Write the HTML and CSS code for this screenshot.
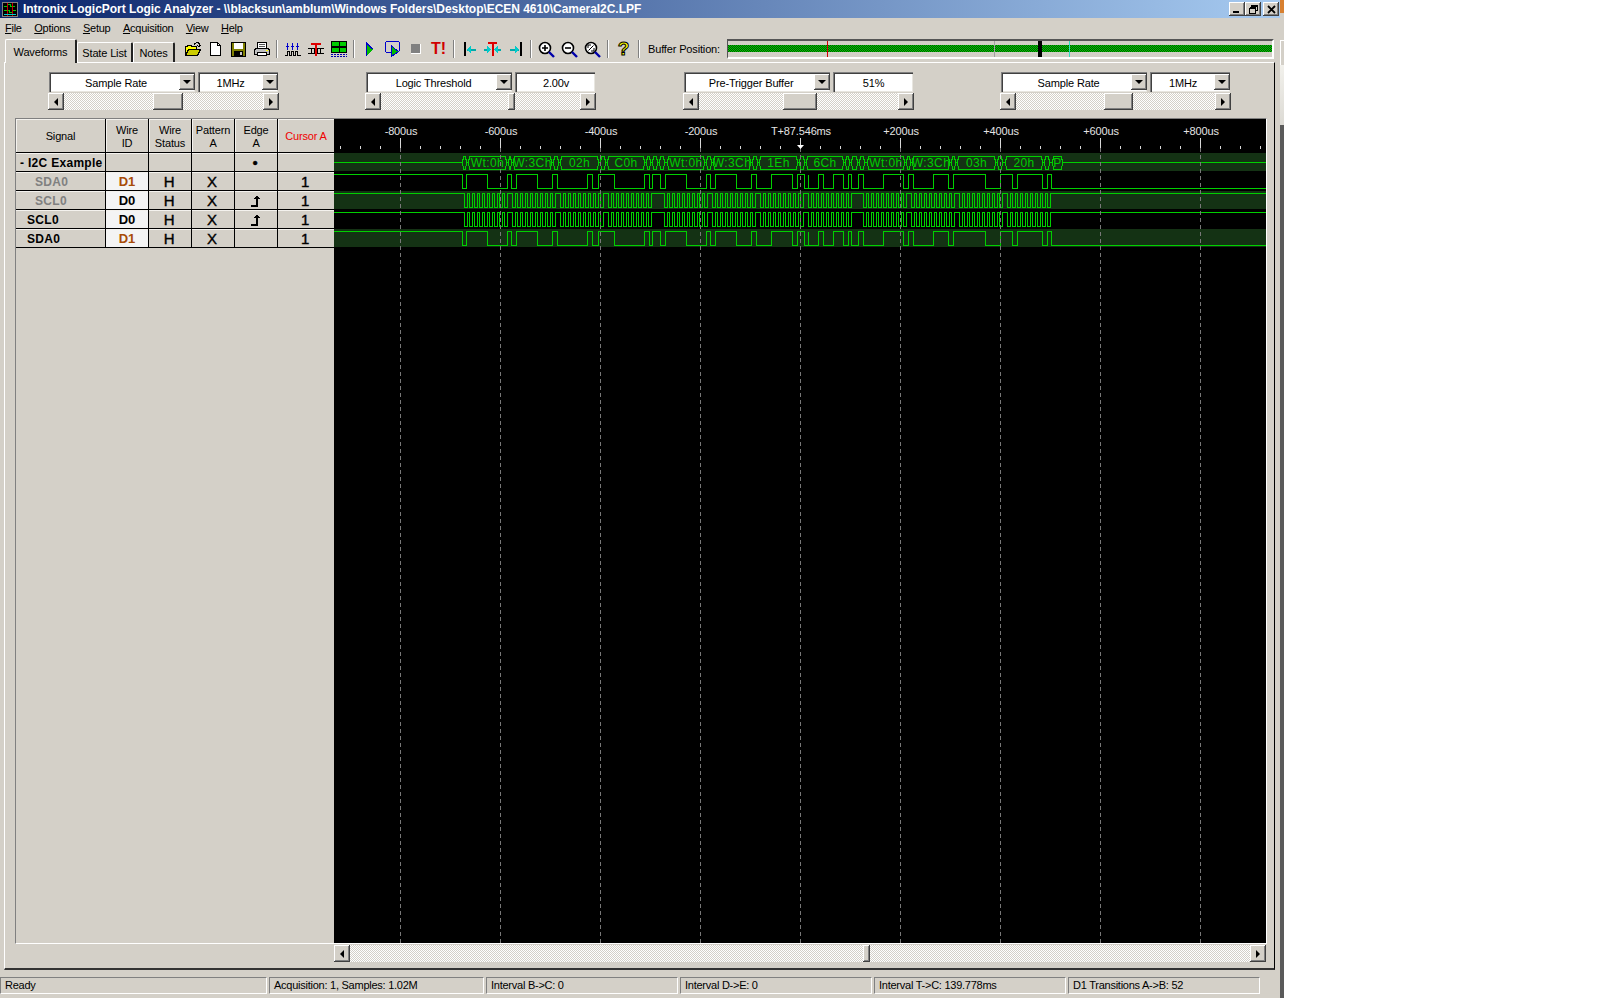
FILE: index.html
```html
<!DOCTYPE html>
<html lang="en">
<head>
    <meta charset="UTF-8">
    <title>Intronix LogicPort Logic Analyzer</title>
    <link rel="stylesheet" href="styles.css">
</head>
<body>
<div class="window">
    <div class="titlebar">
        <svg class="app-icon" width="16" height="15" viewBox="0 0 16 15" shape-rendering="crispEdges">
            <rect width="16" height="15" fill="#808080"/>
            <rect x="1" y="1" width="14" height="13" fill="#000"/>
            <path d="M2 4.500h3v-2h3v2h5M2 8.500h5v2h3v-2h4" fill="none" stroke="#0c0"/>
            <path d="M5.500 1v13M10.500 1v13" stroke="#c00"/>
            <path d="M2 12.500h12" stroke="#0cc"/>
        </svg>
        <span class="title-text">Intronix LogicPort Logic Analyzer - \\blacksun\amblum\Windows Folders\Desktop\ECEN 4610\CameraI2C.LPF</span>
        <div class="caption-btns">
            <button class="caption-btn"><svg width="8" height="8" viewBox="0 0 8 8" shape-rendering="crispEdges"><rect x="0" y="6" width="6" height="2"/></svg></button>
            <button class="caption-btn"><svg width="9" height="9" viewBox="0 0 9 9" shape-rendering="crispEdges"><path d="M2.500 2V.5h6v5H7M.5 3.500h6v5h-6zM.5 2.500h6" fill="none" stroke="#000"/><path d="M2 1h7" stroke="#000"/></svg></button>
            <button class="caption-btn"><svg width="9" height="9" viewBox="0 0 9 9"><path d="M1 1l7 7M8 1l-7 7" stroke="#000" stroke-width="1.800"/></svg></button>
        </div>
    </div>

    <div class="menubar">
        <span><u>F</u>ile</span>
        <span><u>O</u>ptions</span>
        <span><u>S</u>etup</span>
        <span><u>A</u>cquisition</span>
        <span><u>V</u>iew</span>
        <span><u>H</u>elp</span>
    </div>

    <div class="toolbar">
        <div class="tabs">
            <div class="tab tab-active">Waveforms</div>
            <div class="tab tab-state">State List</div>
            <div class="tab tab-notes">Notes</div>
        </div>

        <div class="tool tool-first"><svg width="18" height="16" viewBox="0 0 18 16" shape-rendering="crispEdges">
            <path d="M1.500 14.500V5.500h2v-1h4v1h5v3" fill="#ff0" stroke="#000"/>
            <path d="M1.500 14.500l3-6h12l-3 6z" fill="#cc0" stroke="#000"/>
            <path d="M10 3.500c1-2 4-2.500 5-1v3M13 4l2 2 2-2" fill="none" stroke="#000"/>
        </svg></div>
        <div class="tool"><svg width="13" height="15" viewBox="0 0 13 15" shape-rendering="crispEdges">
            <path d="M1.500 .5h7l3 3v10h-10z" fill="#fff" stroke="#000"/>
            <path d="M8.500 .5v3h3" fill="none" stroke="#000"/>
        </svg></div>
        <div class="tool"><svg width="15" height="15" viewBox="0 0 15 15" shape-rendering="crispEdges">
            <rect x=".5" y=".5" width="14" height="14" fill="#808000" stroke="#000"/>
            <rect x="3" y="1" width="9" height="6" fill="#fff"/>
            <rect x="3" y="9" width="9" height="5" fill="#000"/>
            <rect x="9" y="10" width="2" height="3" fill="#c8c8c8"/>
        </svg></div>
        <div class="tool"><svg width="18" height="15" viewBox="0 0 18 15" shape-rendering="crispEdges">
            <path d="M4.500 6.500V.5h9v6" fill="#fff" stroke="#000"/>
            <path d="M6 2.500h6M6 4.500h6" stroke="#555"/>
            <path d="M1.500 7.500l2-1h11l2 1v5h-15z" fill="#c0c0c0" stroke="#000"/>
            <path d="M4.500 10.500h9v3h-9z" fill="#fff" stroke="#000"/>
            <path d="M13 8.500h2" stroke="#ff0"/>
        </svg></div>
        <div class="tool-sep"></div>

        <div class="tool"><svg width="16" height="15" viewBox="0 0 16 15" shape-rendering="crispEdges">
            <path d="M2.500 7.500V1M7.500 7.500V1M12.500 7.500V1" stroke="#00c"/>
            <path d="M.5 3.500h4l-2 3zM5.500 3.500h4l-2 3zM10.500 3.500h4l-2 3z" fill="#00c"/>
            <path d="M0 13.500h2.500v-4h2v4h2v-4h2v4h2v-4h2v4h3" fill="none" stroke="#000"/>
        </svg></div>
        <div class="tool"><svg width="16" height="15" viewBox="0 0 16 15" shape-rendering="crispEdges">
            <path d="M0 6.500h3l1 5h2l1-5h2l1 5h2l1-5h3M0 11.500h3l1-5h2l1 5h2l1-5h2l1 5h3" fill="none" stroke="#000"/>
            <path d="M3 1.500h10M8 1.500V14" stroke="#d00" stroke-width="2"/>
        </svg></div>
        <div class="tool"><svg width="16" height="16" viewBox="0 0 16 16" shape-rendering="crispEdges">
            <rect x=".5" y=".5" width="15" height="5" fill="#0c0" stroke="#000"/>
            <rect x=".5" y="6.500" width="15" height="5" fill="#0c0" stroke="#000"/>
            <path d="M8.500 1v10" stroke="#000"/>
            <path d="M0 13.500h16M0 15.500h16" stroke="#00a" stroke-dasharray="2 1"/>
        </svg></div>
        <div class="tool-sep"></div>

        <div class="tool"><svg width="8" height="14" viewBox="0 0 8 14" shape-rendering="crispEdges">
            <path d="M1 1l6 6-6 6z" fill="#0b0"/>
            <path d="M.5 0v14M.5 1l6 6" stroke="#00c" fill="none"/>
        </svg></div>
        <div class="tool"><svg width="16" height="16" viewBox="0 0 16 16" shape-rendering="crispEdges">
            <path d="M6 11.500H1.500l-1-1v-9l1-1h12l1 1v8l-1 1h-2" fill="none" stroke="#00c"/>
            <path d="M6.500 5l7 5.500-7 5z" fill="#0b0" stroke="#00c"/>
        </svg></div>
        <div class="tool"><svg width="10" height="10" viewBox="0 0 10 10" shape-rendering="crispEdges">
            <rect width="9" height="9" fill="#808080"/>
            <path d="M0 9.500h10M9.500 0v10" stroke="#fff"/>
        </svg></div>
        <div class="tool tool-text">T!</div>
        <div class="tool-sep"></div>

        <div class="tool"><svg width="12" height="14" viewBox="0 0 12 14" shape-rendering="crispEdges">
            <rect x="0" y="0" width="2" height="14"/>
            <path d="M3 7.500h9" stroke="#0aa" stroke-width="2"/>
            <path d="M3 7.500l4-4v8z" fill="#0cc"/>
        </svg></div>
        <div class="tool"><svg width="17" height="14" viewBox="0 0 17 14" shape-rendering="crispEdges">
            <path d="M4 1h9M8.500 1v13" stroke="#d00" stroke-width="2"/>
            <path d="M0 7.500h6M11 7.500h6" stroke="#0aa" stroke-width="2"/>
            <path d="M7 7.500l-4-4v8zM10 7.500l4-4v8z" fill="#0cc"/>
        </svg></div>
        <div class="tool"><svg width="12" height="14" viewBox="0 0 12 14" shape-rendering="crispEdges">
            <rect x="10" y="0" width="2" height="14"/>
            <path d="M0 7.500h9" stroke="#0aa" stroke-width="2"/>
            <path d="M9 7.500l-4-4v8z" fill="#0cc"/>
        </svg></div>
        <div class="tool-sep"></div>

        <div class="tool"><svg width="17" height="17" viewBox="0 0 17 17">
            <circle cx="7" cy="7" r="5.500" fill="#fff" stroke="#000" stroke-width="1.600"/>
            <path d="M4 7h6M7 4v6" stroke="#000" stroke-width="1.600"/>
            <path d="M11 11l5 5" stroke="#00a" stroke-width="2.400"/>
        </svg></div>
        <div class="tool"><svg width="17" height="17" viewBox="0 0 17 17">
            <circle cx="7" cy="7" r="5.500" fill="#fff" stroke="#000" stroke-width="1.600"/>
            <path d="M4 7h6" stroke="#000" stroke-width="1.600"/>
            <path d="M11 11l5 5" stroke="#00a" stroke-width="2.400"/>
        </svg></div>
        <div class="tool"><svg width="17" height="17" viewBox="0 0 17 17">
            <circle cx="7" cy="7" r="5.500" fill="#fff" stroke="#000" stroke-width="1.600"/>
            <path d="M4.500 9.500l5-5M4 7V4h3M10 7v3H7" fill="none" stroke="#000"/>
            <path d="M11 11l5 5" stroke="#00a" stroke-width="2.400"/>
        </svg></div>
        <div class="tool-sep"></div>

        <div class="tool tool-help">?</div>
        <div class="tool-sep"></div>

        <span class="buffer-label">Buffer Position:</span>
        <div class="buffer-bar">
            <div class="buffer-fill"></div>
            <i class="buffer-mark mark-red" style="left: 99px"></i>
            <i class="buffer-mark mark-grey" style="left: 266px"></i>
            <i class="buffer-mark mark-black" style="left: 310px"></i>
            <i class="buffer-mark mark-cyan" style="left: 341px"></i>
        </div>
    </div>

    <div class="panel">
        <div class="controls">
            <div class="control">
                <div class="control-top">
                    <div class="field combo"><span>Sample Rate</span><b class="drop"></b></div>
                    <div class="field value"><span>1MHz</span><b class="drop"></b></div>
                </div>
                <div class="scrollbar">
                    <b class="sb-btn sb-left"></b>
                    <div class="sb-track"><div class="sb-thumb" style="margin-left: 89px; width: 30px"></div></div>
                    <b class="sb-btn sb-right"></b>
                </div>
            </div>
            <div class="control">
                <div class="control-top">
                    <div class="field combo"><span>Logic Threshold</span><b class="drop"></b></div>
                    <div class="field value"><span>2.00v</span></div>
                </div>
                <div class="scrollbar">
                    <b class="sb-btn sb-left"></b>
                    <div class="sb-track"><div class="sb-thumb" style="margin-left: 127px; width: 7px"></div></div>
                    <b class="sb-btn sb-right"></b>
                </div>
            </div>
            <div class="control">
                <div class="control-top">
                    <div class="field combo"><span>Pre-Trigger Buffer</span><b class="drop"></b></div>
                    <div class="field value"><span>51%</span></div>
                </div>
                <div class="scrollbar">
                    <b class="sb-btn sb-left"></b>
                    <div class="sb-track"><div class="sb-thumb" style="margin-left: 84px; width: 34px"></div></div>
                    <b class="sb-btn sb-right"></b>
                </div>
            </div>
            <div class="control">
                <div class="control-top">
                    <div class="field combo"><span>Sample Rate</span><b class="drop"></b></div>
                    <div class="field value"><span>1MHz</span><b class="drop"></b></div>
                </div>
                <div class="scrollbar">
                    <b class="sb-btn sb-left"></b>
                    <div class="sb-track"><div class="sb-thumb" style="margin-left: 88px; width: 29px"></div></div>
                    <b class="sb-btn sb-right"></b>
                </div>
            </div>
        </div>

        <div class="workspace">
            <div class="signals">
                <div class="signal-grid">
                    <div class="cell head">Signal</div>
                    <div class="cell head">Wire<br>ID</div>
                    <div class="cell head">Wire<br>Status</div>
                    <div class="cell head">Pattern<br>A</div>
                    <div class="cell head">Edge<br>A</div>
                    <div class="cell head head-red">Cursor A</div>

                    <div class="cell name name-group">- I2C Example</div>
                    <div class="cell"></div>
                    <div class="cell"></div>
                    <div class="cell"></div>
                    <div class="cell big">&bull;</div>
                    <div class="cell"></div>

                    <div class="cell name name-sub name-dim">SDA0</div>
                    <div class="cell wire wire-d1">D1</div>
                    <div class="cell big">H</div>
                    <div class="cell big">X</div>
                    <div class="cell"></div>
                    <div class="cell big">1</div>

                    <div class="cell name name-sub name-dim">SCL0</div>
                    <div class="cell wire">D0</div>
                    <div class="cell big">H</div>
                    <div class="cell big">X</div>
                    <div class="cell"><svg class="edge" width="11" height="12" viewBox="0 0 11 12" shape-rendering="crispEdges"><path d="M0 11h6V1" fill="none" stroke="#000" stroke-width="2"/><path d="M3 4l3-4 3 4z"/></svg></div>
                    <div class="cell big">1</div>

                    <div class="cell name">SCL0</div>
                    <div class="cell wire">D0</div>
                    <div class="cell big">H</div>
                    <div class="cell big">X</div>
                    <div class="cell"><svg class="edge" width="11" height="12" viewBox="0 0 11 12" shape-rendering="crispEdges"><path d="M0 11h6V1" fill="none" stroke="#000" stroke-width="2"/><path d="M3 4l3-4 3 4z"/></svg></div>
                    <div class="cell big">1</div>

                    <div class="cell name">SDA0</div>
                    <div class="cell wire wire-d1">D1</div>
                    <div class="cell big">H</div>
                    <div class="cell big">X</div>
                    <div class="cell"></div>
                    <div class="cell big">1</div>
                </div>
            </div>
            <svg id="scope" class="scope" width="932" height="824" viewBox="334 119 932 824"></svg>
        </div>

        <div class="bottom-row">
            <div class="scrollbar scrollbar-wide">
                <b class="sb-btn sb-left"></b>
                <div class="sb-track"><div class="sb-thumb" style="margin-left: 513px; width: 7px"></div></div>
                <b class="sb-btn sb-right"></b>
            </div>
        </div>
    </div>

    <div class="statusbar">
        <div class="status-cell">Ready</div>
        <div class="status-cell">Acquisition: 1, Samples: 1.02M</div>
        <div class="status-cell">Interval B-&gt;C: 0</div>
        <div class="status-cell">Interval D-&gt;E: 0</div>
        <div class="status-cell">Interval T-&gt;C: 139.778ms</div>
        <div class="status-cell">D1 Transitions A-&gt;B: 52</div>
    </div>
</div>
<div class="window-edge">
    <div class="edge-orange"></div>
    <div class="edge-grey"></div>
    <div class="edge-btn"></div>
    <div class="edge-light"></div>
    <div class="edge-dark"></div>
</div>
<script src="script.js"></script>
</body>
</html>
```

FILE: styles.css
```css
/* General */
* {
    box-sizing: border-box;
}

body {
    display: flex;
    width: 1598px;
    height: 998px;
    margin: 0;
    overflow: hidden;
    background-color: #fff;
    font-family: "Liberation Sans", Arial, sans-serif;
    font-size: 11px;
    letter-spacing: -0.15px;
    color: #000;
}

.window {
    display: flex;
    flex-direction: column;
    width: 1280px;
    height: 998px;
    background-color: #d4d0c8;
}

/* Title bar */
.titlebar {
    display: flex;
    align-items: center;
    flex: none;
    height: 18px;
    padding-left: 2px;
    background: linear-gradient(90deg, #0a246a, #a6caf0);
    color: #fff;
}

.app-icon {
    flex: none;
}

.title-text {
    margin-left: 5px;
    font-size: 12px;
    font-weight: bold;
    letter-spacing: -0.04px;
    white-space: nowrap;
}

.caption-btns {
    display: flex;
    margin-left: auto;
    margin-right: 1px;
}

.caption-btn {
    display: flex;
    align-items: center;
    justify-content: center;
    width: 16px;
    height: 14px;
    padding: 0;
    border: none;
    background-color: #d4d0c8;
    box-shadow: inset -1px -1px #404040, inset 1px 1px #fff, inset -2px -2px #808080;
}

.caption-btn:last-child {
    margin-left: 2px;
}

/* Menu */
.menubar {
    display: flex;
    align-items: center;
    flex: none;
    gap: 12.500px;
    height: 20px;
    padding-left: 5px;
    letter-spacing: -0.25px;
}

/* Toolbar and tabs */
.toolbar {
    display: flex;
    flex: none;
    height: 23px;
    margin-top: 1px;
}

.tabs {
    display: flex;
    align-items: flex-end;
    flex: none;
    width: 175px;
    padding-left: 5px;
}

.tab {
    display: flex;
    align-items: center;
    justify-content: center;
    height: 20px;
    background-color: #d4d0c8;
    border-top: 1px solid #fff;
    border-left: 1px solid #fff;
    border-right: 2px solid #222;
    border-radius: 2px 2px 0 0;
}

.tab-active {
    position: relative;
    z-index: 1;
    width: 72px;
    height: 24px;
    margin-bottom: -1px;
}

.tab-state {
    width: 56px;
}

.tab-notes {
    width: 42px;
}

.tool {
    display: flex;
    align-items: center;
    justify-content: center;
    flex: none;
    width: 23px;
    height: 20px;
}

.tool-first {
    margin-left: 6px;
}

.tool-text {
    font-size: 16px;
    font-weight: bold;
    color: #d00000;
}

.tool-help {
    font-size: 19px;
    font-weight: bold;
    color: #ff0;
    -webkit-text-stroke: 1px #000;
}

.tool-sep {
    flex: none;
    width: 2px;
    height: 18px;
    margin: 1px 3px 0;
    border-left: 1px solid #808080;
    border-right: 1px solid #fff;
}

.buffer-label {
    margin: 1px 0 0 5px;
    line-height: 18px;
    white-space: nowrap;
}

.buffer-bar {
    position: relative;
    display: flex;
    align-items: center;
    width: 547px;
    height: 20px;
    margin-left: auto;
    margin-right: 6px;
    border-top: 2px solid #555;
    border-left: 1px solid #555;
    border-right: 2px solid #fff;
    border-bottom: 2px solid #fff;
}

.buffer-fill {
    flex: 1;
    height: 7px;
    margin-top: -1px;
    background: repeating-conic-gradient(#00d000 0 25%, #005000 0 50%) 0 0 / 2px 2px;
}

.buffer-mark {
    position: absolute;
    top: 0;
    bottom: 0;
    width: 1px;
}

.mark-red {
    background-color: #d00000;
}

.mark-grey {
    background-color: #a0a0a0;
}

.mark-black {
    width: 4px;
    background-color: #000;
}

.mark-cyan {
    background-color: #30e0c0;
}

/* Main panel */
.panel {
    display: flex;
    flex-direction: column;
    flex: none;
    width: 1271px;
    height: 908px;
    margin-left: 4px;
    padding-left: 10px;
    border-top: 1px solid #fff;
    border-left: 1px solid #fff;
    border-right: 1px solid #000;
    border-bottom: 2px solid #333;
}

.controls {
    display: flex;
    flex: none;
    gap: 86.500px;
    height: 55px;
    padding: 9px 0 0 32.600px;
}

.control {
    width: 231px;
}

.control-top {
    display: flex;
    gap: 3px;
    height: 20px;
    margin-left: 1px;
    margin-bottom: 1px;
}

.field {
    display: flex;
    align-items: center;
    background-color: #fff;
    box-shadow: inset 1px 1px #808080, inset 2px 2px #404040, inset -1px -1px #e8e6e0;
    padding: 2px 0 2px 2px;
}

.field span {
    flex: 1;
    padding-top: 1px;
    text-align: center;
}

.combo span {
    padding-left: 3px;
}

.combo {
    width: 146px;
}

.value {
    width: 80px;
}

.drop {
    display: flex;
    align-items: center;
    justify-content: center;
    flex: none;
    width: 16px;
    height: 16px;
    background-color: #d4d0c8;
    box-shadow: inset -1px -1px #404040, inset 1px 1px #fff, inset -2px -2px #808080;
}

.drop::after {
    content: "";
    border-top: 4px solid #000;
    border-left: 4px solid transparent;
    border-right: 4px solid transparent;
}

.scrollbar {
    display: flex;
    height: 17px;
}

.sb-btn {
    display: flex;
    align-items: center;
    justify-content: center;
    flex: none;
    width: 16px;
    background-color: #d4d0c8;
    box-shadow: inset -1px -1px #404040, inset 1px 1px #fff, inset -2px -2px #808080;
}

.sb-left::after {
    content: "";
    border-right: 4px solid #000;
    border-top: 4px solid transparent;
    border-bottom: 4px solid transparent;
}

.sb-right::after {
    content: "";
    border-left: 4px solid #000;
    border-top: 4px solid transparent;
    border-bottom: 4px solid transparent;
}

.sb-track {
    display: flex;
    flex: 1;
    background: repeating-conic-gradient(#d4d0c8 0 25%, #fff 0 50%) 0 0 / 2px 2px;
}

.sb-thumb {
    flex: none;
    background-color: #d4d0c8;
    box-shadow: inset -1px -1px #404040, inset 1px 1px #fff, inset -2px -2px #808080;
}

/* Signal table and waveform area */
.workspace {
    display: flex;
    flex: none;
    width: 1252px;
    height: 826px;
    border-top: 1px solid #808080;
    border-left: 1px solid #808080;
    border-right: 1px solid #fff;
    border-bottom: 1px solid #fff;
}

.signals {
    flex: none;
    width: 318px;
}

.signal-grid {
    display: grid;
    grid-template-columns: 89px 42px 42px 42px 42px 56px;
    grid-template-rows: 33px repeat(5, 18px);
    gap: 1px;
    padding-bottom: 1px;
    background-color: #000;
}

.cell {
    display: flex;
    align-items: center;
    justify-content: center;
    background-color: #d4d0c8;
    box-shadow: inset 0 1px #f4f2ee;
}

.head {
    padding-top: 2px;
    text-align: center;
    line-height: 13px;
    box-shadow: inset 1px 1px #f4f2ee;
}

.head-red {
    color: #f00000;
}

.name {
    justify-content: flex-start;
    padding: 1px 0 0 11px;
    font-size: 12px;
    font-weight: bold;
    letter-spacing: 0.300px;
    white-space: nowrap;
}

.name-group {
    padding-left: 4px;
}

.name-sub {
    padding-left: 19px;
}

.name-dim {
    color: #808080;
}

.wire {
    background-color: #f4f4f4;
    font-size: 13px;
    font-weight: bold;
}

.wire-d1 {
    color: #a84c08;
}

.big {
    padding-right: 2px;
    font-size: 15px;
    -webkit-text-stroke: 0.400px #000;
}

.edge {
    margin-top: 1px;
}

.scope {
    display: block;
    flex: none;
    background-color: #000;
}

.bottom-row {
    display: flex;
    justify-content: flex-end;
    flex: none;
    width: 1252px;
    margin-top: 1px;
    padding-right: 1px;
}

.scrollbar-wide {
    width: 932px;
}

/* Waveform drawing */
.band {
    fill: #143214;
}

.wave {
    fill: none;
    stroke: #00d000;
    stroke-width: 1;
    shape-rendering: crispEdges;
}

.bus-text {
    fill: #00cc00;
    font-size: 12px;
    letter-spacing: 0.400px;
    text-anchor: middle;
}

.grid-line {
    stroke: #787878;
    stroke-dasharray: 4 3;
    shape-rendering: crispEdges;
}

.tick {
    stroke: #d8d8d8;
    shape-rendering: crispEdges;
}

.ruler-text {
    fill: #e4e4e4;
    font-size: 11px;
    text-anchor: middle;
}

.marker {
    fill: #fff;
}

/* Status bar */
.statusbar {
    display: grid;
    grid-template-columns: 267px 215px 192px 192px 192px 192px;
    gap: 2px;
    flex: none;
    height: 16px;
    margin-top: 7px;
    letter-spacing: -0.25px;
}

.status-cell {
    padding-left: 4px;
    line-height: 15px;
    border-top: 1px solid #808080;
    border-left: 1px solid #808080;
    border-right: 1px solid #fff;
    border-bottom: 1px solid #fff;
    white-space: nowrap;
}

/* Strip of the window behind */
.window-edge {
    display: flex;
    flex-direction: column;
    flex: none;
    width: 4px;
    height: 998px;
}

.edge-orange {
    height: 13px;
    background-color: #d88030;
}

.edge-grey {
    height: 27px;
    background-color: #d4d0c8;
}

.edge-btn {
    height: 25px;
    background-color: #d4d0c8;
    border-top: 1px solid #fff;
    border-left: 1px solid #fff;
}

.edge-light {
    height: 60px;
    background: linear-gradient(#f2f1ec, #dcdad4);
}

.edge-dark {
    flex: 1;
    background-color: #5a5a5a;
}
```

FILE: script.js
```js
const NS = 'http://www.w3.org/2000/svg';
const scope = document.getElementById('scope');
const LEFT = 334;
const RIGHT = 1266;

function add(tag, attrs, text) {
    const el = document.createElementNS(NS, tag);
    for (const key in attrs) el.setAttribute(key, attrs[key]);
    if (text) el.textContent = text;
    scope.appendChild(el);
    return el;
}

// Turn a list of edges into a square wave that starts high
function squareWave(edges, high, low) {
    let d = `M${LEFT} ${high + 0.5}`;
    let level = high;
    edges.forEach(x => {
        level = level === high ? low : high;
        d += `H${Math.round(x) + 0.5}V${level + 0.5}`;
    });
    return d + `H${RIGHT}`;
}

// Bands behind rows
[153, 191, 229].forEach(y => add('rect', { class: 'band', x: LEFT, y: y, width: RIGHT - LEFT, height: 18 }));

// Ruler
for (let x = 340; x < RIGHT; x += 20) {
    if ((x - 400) % 100 !== 0) add('path', { class: 'tick', d: `M${x + 0.5} 146V149` });
}
const labels = { 400: '-800us', 500: '-600us', 600: '-400us', 700: '-200us', 800: 'T+87.546ms', 900: '+200us', 1000: '+400us', 1100: '+600us', 1200: '+800us' };
Object.keys(labels).forEach(key => {
    const x = Number(key);
    add('text', { class: 'ruler-text', x: x + 1, y: 135 }, labels[key]);
    if (x !== 800) add('path', { class: 'tick', d: `M${x + 0.5} 138V149` });
});

// SDA, read off the trace
const sda = [
    462, 466, 487, 507, 511, 516, 537, 552, 557, 587, 592, 598, 614, 644, 649, 652, 660, 665,
    686, 706, 710, 715, 736, 751, 756, 771, 792, 797, 804, 808, 808, 818, 823, 833, 843, 848, 851, 858, 863, 883, 903, 908, 913, 933, 948, 953, 985, 1000,
    1012, 1017, 1042, 1047, 1051
];

// SCL: three bursts of four bytes, nine clocks each, 3px between bytes
const scl = [];
[464, 664, 863].forEach(start => {
    for (let byte = 0; byte < 4; byte++) {
        for (let bit = 0; bit < 9; bit++) {
            const x = start + byte * 48 + bit * 5;
            scl.push(x, x + 3);
        }
    }
});

add('path', { class: 'wave', d: squareWave(sda, 174, 188) });
add('path', { class: 'wave', d: squareWave(scl, 193, 207) });
add('path', { class: 'wave', d: squareWave(scl, 212, 226) });
add('path', { class: 'wave', d: squareWave(sda, 231, 245) });

// I2C bus row
const busTop = 156.5;
const busMid = 162.5;
const busBottom = 169.5;
const cells = [
    [462, 467], [468, 507, 'Wt:0h'], [508, 512], [513, 552, 'W:3Ch'], [553, 559], [560, 599, '02h'], [600, 606], [607, 645, 'C0h'],
    [646, 651], [652, 658], [659, 665], [667, 705, 'Wt:0h'], [706, 712], [713, 751, 'W:3Ch'], [752, 758], [759, 798, '1Eh'], [799, 805], [806, 844, '6Ch'],
    [845, 850], [851, 858], [859, 865], [867, 905, 'Wt:0h'], [906, 911], [912, 950, 'W:3Ch'], [951, 956], [957, 996, '03h'], [997, 1003], [1005, 1043, '20h'],
    [1044, 1050], [1052, 1063, 'P']
];
let bus = `M${LEFT} ${busMid}H462M1063 ${busMid}H${RIGHT}`;
cells.forEach(([a, b]) => {
    bus += `M${a} ${busMid}L${a + 2} ${busTop}H${b - 2}L${b} ${busMid}L${b - 2} ${busBottom}H${a + 2}Z`;
});
add('path', { class: 'wave', d: bus });
cells.filter(c => c[2]).forEach(([a, b, text]) => {
    add('text', { class: 'bus-text', x: (a + b) / 2, y: 167 }, text);
});

// Dashed grid on top of the traces
for (let x = 400; x <= 1200; x += 100) {
    add('path', { class: 'grid-line', d: `M${x + 0.5} 148V943` });
}

// Trigger marker
add('path', { class: 'tick', d: 'M800.500 138V146' });
add('path', { class: 'marker', d: 'M797 145H804L800.500 149Z' });
```
